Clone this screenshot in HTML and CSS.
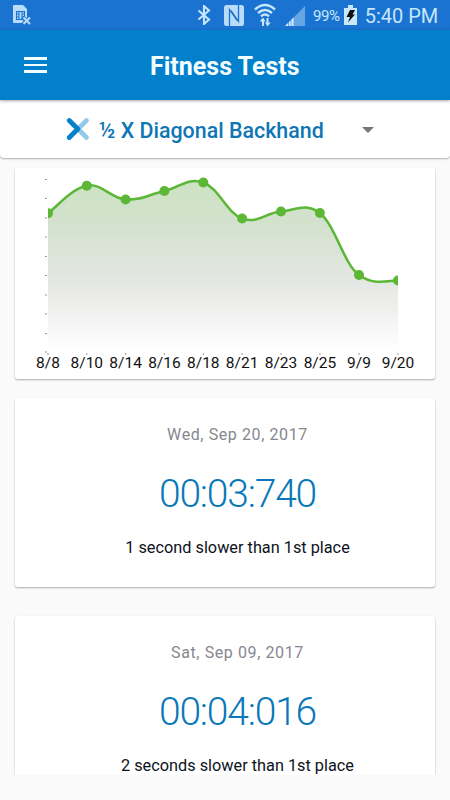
FILE: index.html
```
<!DOCTYPE html>
<html lang="en">

<head>
    <meta charset="UTF-8">
    <meta name="viewport" content="width=device-width, initial-scale=1.0">
    <title>Fitness Tests</title>
    <link rel="stylesheet" href="styles.css">
</head>

<body>
    <div class="status-bar">
        <svg class="sim" width="20" height="22" viewBox="0 0 20 22">
            <path d="M2 1h9l4 4v14H2a1 1 0 0 1-1-1V2a1 1 0 0 1 1-1z" fill="#b9ddf8"/>
            <path d="M4.500 7.500h8v8h-8zM4.500 10h2.500M4.500 13h2.500M10 10h2.500M10 13h2.500M7 7.500v8M10 7.500v8" fill="none" stroke="#1a73d1" stroke-width="1.100"/>
            <path d="M10.500 13l8 8M18.500 13l-8 8" stroke="#1a73d1" stroke-width="4"/>
            <path d="M11.500 13.500l6.500 6.500M18 13.500l-6.500 6.500" stroke="#b9ddf8" stroke-width="2"/>
        </svg>
        <svg class="bluetooth" width="14" height="20" viewBox="0 0 14 20">
            <path d="M1.500 5.500l10.500 9-5 4.500V1l5 4.500-10.500 9" fill="none" stroke="#c5e6fb" stroke-width="2.100"/>
        </svg>
        <svg class="nfc" width="20" height="21" viewBox="0 0 20 21">
            <rect width="20" height="21" rx="2.500" fill="#b9ddf8"/>
            <path d="M5.500 21V4.500L13 15.500M14.500 0v16.500L7 5.500" fill="none" stroke="#1a73d1" stroke-width="1.300"/>
        </svg>
        <svg class="wifi" width="22" height="24" viewBox="0 0 22 24">
            <g fill="none" stroke="#c5e6fb" stroke-width="2.400">
                <path d="M1 6.500q10-9 20 0M4 10q7-6 14 0M7 13.300q4-3.500 8 0"/>
                <path d="M9 23v-6M13.500 15v6" stroke-width="2"/>
            </g>
            <path d="M5.800 18.500l3.200-4 2.500 4zM11 19.500h5.700l-3.200 4z" fill="#c5e6fb"/>
        </svg>
        <svg class="signal" width="20" height="21" viewBox="0 0 20 21">
            <path d="M0 21L20 1v20z" fill="#66a6e5"/>
            <path d="M0 21l3-3v3zM4 21v-4l1.500-1.500V21zM6.500 21v-6.500L8.500 12.500V21z" fill="#d0ebfc"/>
        </svg>
        <span class="percent">99%</span>
        <svg class="battery" width="13" height="20" viewBox="0 0 13 20">
            <path d="M4 0h5v3h4v17H0V3h4z" fill="#c9e8fb"/>
            <path d="M6 5h5L8.500 9.500H11L4 17.500l2-5.500H2.500z" fill="#111"/>
        </svg>
        <span class="clock">5:40 PM</span>
    </div>

    <header class="app-bar">
        <div class="menu">
            <span></span>
            <span></span>
            <span></span>
        </div>
        <h1>Fitness Tests</h1>
    </header>

    <div class="selector">
        <svg width="24" height="24" viewBox="0 0 24 24">
            <path d="M20.500 3.500L12 12l8.500 8.500" fill="none" stroke="#92c8e9" stroke-width="4.600" stroke-linecap="round"/>
            <path d="M3.300 3.500l8.500 8.500-8.500 8.500" fill="none" stroke="#0580cb" stroke-width="4.800" stroke-linecap="round" stroke-linejoin="round"/>
        </svg>
        <span class="test-name">½ X Diagonal Backhand</span>
        <span class="arrow"></span>
    </div>

    <main class="content">
        <section class="card chart">
            <svg width="420" height="211" viewBox="0 0 420 211">
                <defs>
                    <linearGradient id="fade" x1="0" y1="0" x2="0" y2="1">
                        <stop offset="0" stop-color="#cce3c2"/>
                        <stop offset="0.25" stop-color="#d3e1cd"/>
                        <stop offset="0.6" stop-color="#e5e7e4"/>
                        <stop offset="1" stop-color="#fff"/>
                    </linearGradient>
                    <clipPath id="plot">
                        <rect x="33" y="0" width="350" height="185"/>
                    </clipPath>
                </defs>
                <path class="ticks" d="M30 11.500h2M30 30.500h2M30 50h2M30 69h2M30 88.500h2M30 107.500h2M30 127h2M30 146h2M30 165.500h2M30 184h2M33 185v2M71.800 185v2M110.600 185v2M149.400 185v2M188.300 185v2M227.100 185v2M266 185v2M304.900 185v2M344 185v2M383 185v2"/>
                <g clip-path="url(#plot)">
                    <path fill="url(#fade)" d="M33 45.300C40.800 39.800 56.300 20.500 71.800 17.700C87.300 14.900 95.100 30.400 110.600 31.500C126.100 32.600 133.900 26.400 149.400 23C164.900 19.600 172.800 9 188.300 14.500C203.800 20 211.600 44.700 227.100 50.500C242.600 56.300 250.500 44.600 266 43.500C281.500 42.400 289.400 34.300 304.900 45C320.400 57.700 328.500 95.500 344 107C359.500 118.500 375.200 112 383 112.500V184H33z"/>
                    <path class="line" d="M33 45.300C40.800 39.800 56.300 20.500 71.800 17.700C87.300 14.900 95.100 30.400 110.600 31.500C126.100 32.600 133.900 26.400 149.400 23C164.900 19.600 172.800 9 188.300 14.500C203.800 20 211.600 44.700 227.100 50.500C242.600 56.300 250.500 44.600 266 43.500C281.500 42.400 289.400 34.300 304.900 45C320.400 57.700 328.500 95.500 344 107C359.500 118.500 375.200 112 383 112.500"/>
                    <g fill="#5bb735">
                        <circle cx="33" cy="45.300" r="5"/>
                        <circle cx="71.800" cy="17.700" r="5"/>
                        <circle cx="110.600" cy="31.500" r="5"/>
                        <circle cx="149.400" cy="23" r="5"/>
                        <circle cx="188.300" cy="14.500" r="5"/>
                        <circle cx="227.100" cy="50.500" r="5"/>
                        <circle cx="266" cy="43.500" r="5"/>
                        <circle cx="304.900" cy="45" r="5"/>
                        <circle cx="344" cy="107" r="5"/>
                        <circle cx="383" cy="112.500" r="5"/>
                    </g>
                </g>
                <g class="labels">
                    <text x="33" y="200">8/8</text>
                    <text x="71.800" y="200">8/10</text>
                    <text x="110.600" y="200">8/14</text>
                    <text x="149.400" y="200">8/16</text>
                    <text x="188.300" y="200">8/18</text>
                    <text x="227.100" y="200">8/21</text>
                    <text x="266" y="200">8/23</text>
                    <text x="304.900" y="200">8/25</text>
                    <text x="344" y="200">9/9</text>
                    <text x="383" y="200">9/20</text>
                </g>
            </svg>
        </section>

        <section class="card result">
            <p class="date">Wed, Sep 20, 2017</p>
            <p class="time">00:03:740</p>
            <p class="note">1 second slower than 1st place</p>
        </section>

        <section class="card result">
            <p class="date">Sat, Sep 09, 2017</p>
            <p class="time">00:04:016</p>
            <p class="note">2 seconds slower than 1st place</p>
        </section>
    </main>
</body>

</html>
```
FILE: styles.css
```
body {
    margin: 0;
    height: 800px;
    overflow: hidden;
    background-color: #fafafa;
    font-family: Roboto, sans-serif;
}

.status-bar {
    display: flex;
    align-items: center;
    height: 30px;
    padding: 0 12px;
    background-color: #1a73d1;
    color: #c5e6fb;
}

.status-bar svg {
    flex: none;
}

.sim {
    margin-top: -1px;
}

.bluetooth {
    margin-left: 165px;
}

.nfc {
    margin-left: 13px;
}

.wifi {
    margin-left: 10px;
}

.signal {
    margin-left: 9px;
}

.percent {
    width: 28px;
    margin: 1px 0 0 8px;
    font-size: 15px;
    letter-spacing: -0.4px;
}

.battery {
    margin-left: 4px;
}

.clock {
    margin: 1px 0 0 8px;
    font-size: 20px;
    white-space: nowrap;
}

.app-bar {
    display: flex;
    align-items: center;
    height: 70px;
    background-color: #0280cb;
    box-shadow: 0 1px 3px rgba(0, 0, 0, 0.35);
    position: relative;
    color: #f4fdff;
}

.menu {
    display: flex;
    flex-direction: column;
    gap: 4px;
    width: 23px;
    margin-left: 24px;
}

.menu span {
    height: 2.5px;
    background-color: #f4fdff;
}

.app-bar h1 {
    margin: 4px 0 0 103px;
    font-size: 25px;
    font-weight: 700;
    line-height: 30px;
}

.selector {
    display: flex;
    align-items: center;
    box-sizing: border-box;
    height: 58px;
    padding-left: 66px;
    background-color: #fff;
    border-radius: 0 0 4px 4px;
    box-shadow: 0 1px 2px rgba(0, 0, 0, 0.3);
}

.test-name {
    margin: 2px 0 0 9px;
    width: 224px;
    font-size: 21.4px;
    font-weight: 500;
    color: #0f76b5;
    white-space: nowrap;
}

.arrow {
    margin: 1px 0 0 39px;
    border-left: 6px solid transparent;
    border-right: 6px solid transparent;
    border-top: 6px solid #757575;
}

.content {
    height: 607px;
    margin-top: 10px;
    padding: 0 15px;
    overflow: hidden;
}

.card {
    background-color: #fff;
    border-radius: 3px;
    box-shadow: 0 1px 2px rgba(0, 0, 0, 0.32);
}

.chart {
    height: 211px;
    margin-bottom: 19px;
    border-radius: 0 0 3px 3px;
}

.chart svg {
    display: block;
}

.ticks {
    stroke: #999;
    stroke-width: 1;
}

.line {
    fill: none;
    stroke: #5bb735;
    stroke-width: 2.5;
}

.labels {
    font-size: 15.5px;
    text-anchor: middle;
    fill: #111;
}

.result {
    box-sizing: border-box;
    height: 189px;
    margin-bottom: 29px;
    padding: 27px 0 0 25px;
    text-align: center;
}

.result p {
    margin: 0;
}

.date {
    font-size: 16px;
    line-height: 20px;
    letter-spacing: 0.6px;
    color: #87878f;
}

.time {
    padding-top: 26px;
    font-size: 39px;
    font-weight: 300;
    line-height: 46px;
    letter-spacing: -1.2px;
    color: #0878b8;
}

.note {
    padding-top: 21px;
    font-size: 16.3px;
    line-height: 20px;
    color: #0c1320;
}
```
